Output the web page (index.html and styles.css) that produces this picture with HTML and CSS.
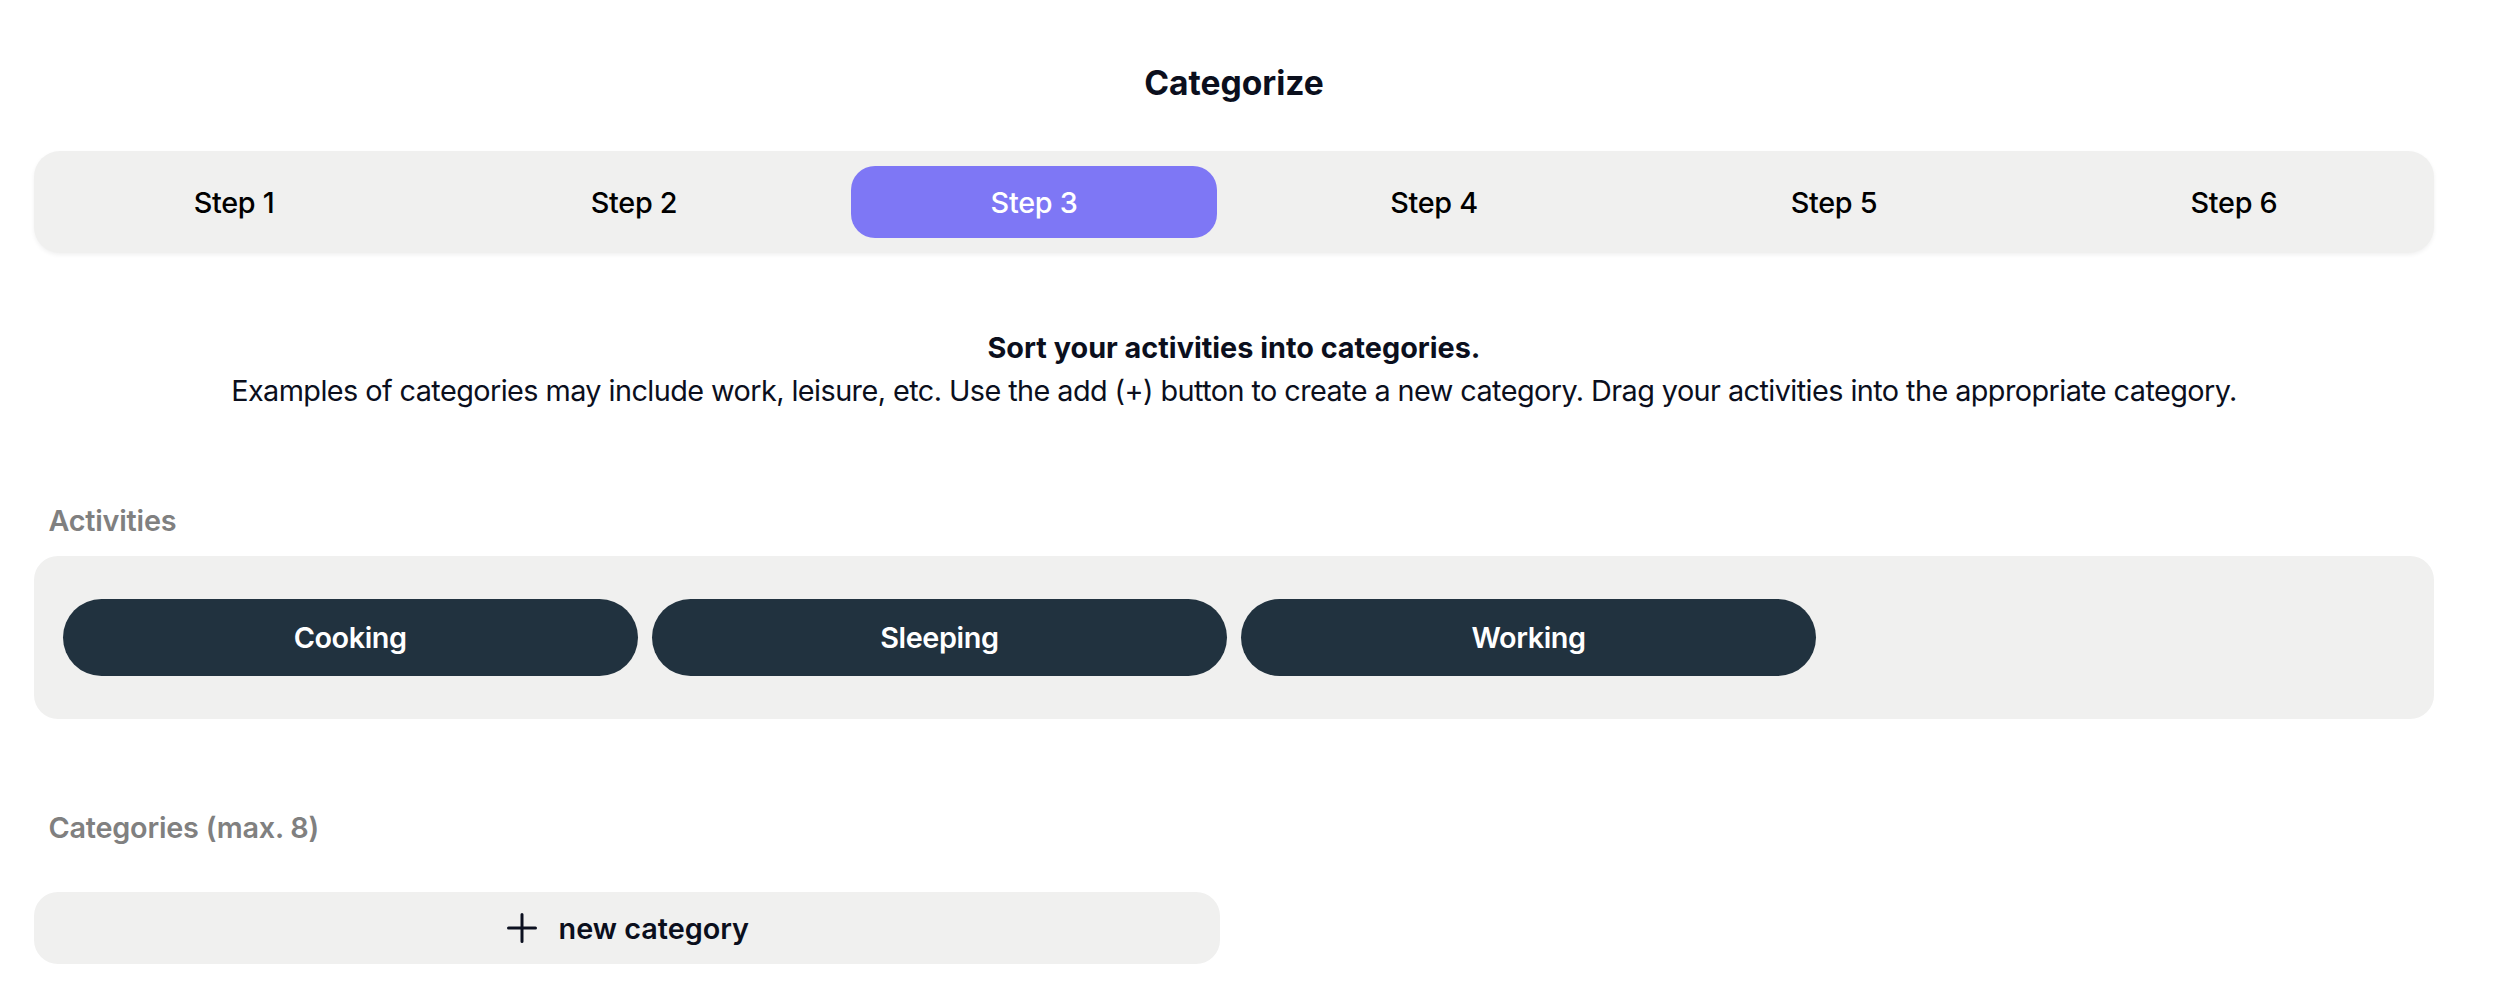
FILE: index.html
```html
<!DOCTYPE html>
<html lang="en">
<head>
<meta charset="utf-8">
<title>Categorize</title>
<link rel="stylesheet" href="styles.css">
</head>
<body>
<main class="page">
  <h1 class="title">Categorize</h1>
  <nav class="stepper">
    <div class="step-cell"><button class="step">Step 1</button></div>
    <div class="step-cell"><button class="step">Step 2</button></div>
    <div class="step-cell"><button class="step step-active">Step 3</button></div>
    <div class="step-cell"><button class="step">Step 4</button></div>
    <div class="step-cell"><button class="step">Step 5</button></div>
    <div class="step-cell"><button class="step">Step 6</button></div>
  </nav>
  <section class="intro">
    <p class="intro-strong">Sort your activities into categories.</p>
    <p class="intro-text">Examples of categories may include work, leisure, etc. Use the add (+) button to create a new category. Drag your activities into the appropriate category.</p>
  </section>
  <section class="group">
    <h2 class="group-label">Activities</h2>
    <div class="activity-panel">
      <div class="chip">Cooking</div>
      <div class="chip">Sleeping</div>
      <div class="chip">Working</div>
    </div>
  </section>
  <section class="group group-categories">
    <h2 class="group-label">Categories (max. 8)</h2>
    <div class="category-grid">
      <button class="add-category">
        <svg class="plus" width="30" height="30" viewBox="0 0 30 30" aria-hidden="true">
          <path d="M15 1.5 V28.5 M1.5 15 H28.5" stroke="#0c1020" stroke-width="3" stroke-linecap="round" fill="none"/>
        </svg>
        <span>new category</span>
      </button>
    </div>
  </section>
</main>
</body>
</html>
```
FILE: styles.css
```css
* {
  box-sizing: border-box;
}

html, body {
  margin: 0;
  padding: 0;
  background: #ffffff;
}

body {
  font-family: Inter, "Noto Sans", "Liberation Sans", sans-serif;
  font-size: 28.8px;
  line-height: 1.5;
  color: #0b0f1d;
}

.page {
  width: 2400px;
  margin-left: 34px;
  padding-top: 63px;
}

.title {
  margin: 0;
  font-size: 33.6px;
  line-height: 40px;
  font-weight: 700;
  text-align: center;
  color: #0b0f1d;
}

.stepper {
  margin-top: 48px;
  display: grid;
  grid-template-columns: repeat(6, 1fr);
  padding: 15px 0;
  background: #f0f0ef;
  border-radius: 26px;
  box-shadow: 0 2px 4px rgba(0, 0, 0, 0.06);
}

.step-cell {
  padding: 0 17px;
}

.step {
  display: flex;
  align-items: center;
  justify-content: center;
  width: 100%;
  height: 72px;
  border: 0;
  border-radius: 24px;
  background: transparent;
  font-family: inherit;
  font-size: 28.8px;
  font-weight: 500;
  letter-spacing: -0.3px;
  color: #000000;
  cursor: pointer;
}

.step-active {
  background: #7e77f5;
  color: #ffffff;
}

.intro {
  margin-top: 72.6px;
  text-align: center;
}

.intro p {
  margin: 0;
}

.intro-strong {
  font-weight: 700;
}

.intro-text {
  letter-spacing: -0.56px;
}

.group {
  margin-top: 87px;
}

.group-label {
  margin: 0;
  padding-left: 14.4px;
  font-size: 28.8px;
  line-height: 43.2px;
  font-weight: 600;
  letter-spacing: -0.2px;
  color: #808080;
}

.activity-panel {
  margin-top: 13.8px;
  display: grid;
  grid-template-columns: repeat(4, 1fr);
  gap: 14.4px;
  padding: 43px 28.8px;
  background: #f0f0ef;
  border-radius: 24px;
}

.chip {
  display: flex;
  align-items: center;
  justify-content: center;
  height: 77px;
  border-radius: 39px;
  background: #21323f;
  color: #ffffff;
  font-weight: 600;
  letter-spacing: -0.4px;
}

.category-grid {
  margin-top: 43px;
  display: grid;
  grid-template-columns: repeat(2, 1fr);
  gap: 28.8px;
}

.add-category {
  display: flex;
  align-items: center;
  justify-content: center;
  gap: 22px;
  height: 72px;
  padding-left: 8px;
  border: 0;
  border-radius: 24px;
  background: #f0f0ef;
  font-family: inherit;
  font-size: 28.8px;
  font-weight: 600;
  color: #0b0f1d;
  cursor: pointer;
}

.plus {
  display: block;
  flex: none;
}
```
